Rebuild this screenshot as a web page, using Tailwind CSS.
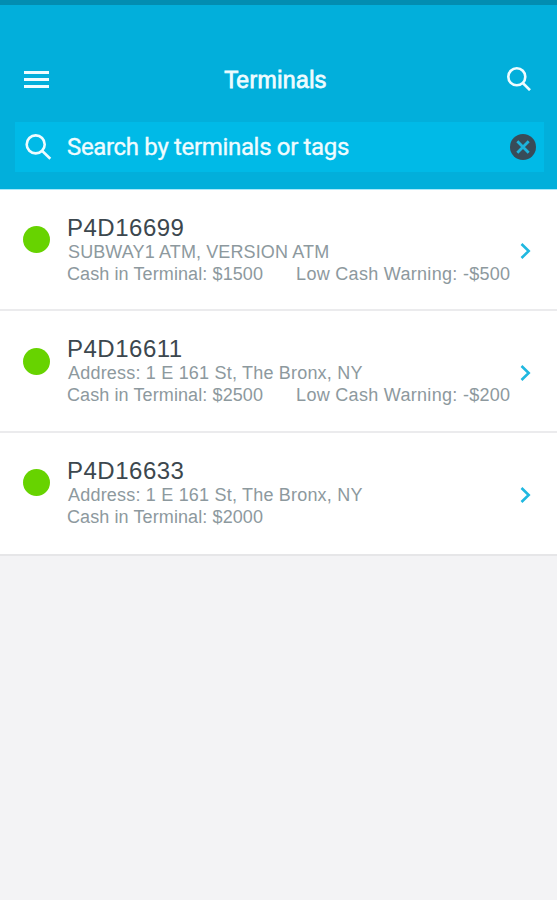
<!DOCTYPE html>
<html lang="en">
<head>
    <meta charset="UTF-8">
    <meta name="viewport" content="width=device-width, initial-scale=1.0">
    <title>Terminals</title>
    <script src="https://cdn.jsdelivr.net/npm/@tailwindcss/browser@4"></script>
</head>
<body class="bg-[#f3f3f5] min-h-screen font-['Liberation_Sans',sans-serif]">
    <!-- Header -->
    <header class="h-[190px] bg-[#02afdb] border-t-5 border-t-[#028db1] border-b border-b-[#a9e9fa] text-[#effcff]">
        <div class="flex items-center justify-between h-[116px] pt-[34px] pl-6 pr-[26px]">
            <button class="flex flex-col gap-1 w-[25px] mb-0.5">
                <span class="h-[3px] w-full bg-current"></span>
                <span class="h-[3px] w-full bg-current"></span>
                <span class="h-[3px] w-full bg-current"></span>
            </button>
            <h1 class="mr-[5px] text-[23px] leading-7 font-normal tracking-[0.45px] [-webkit-text-stroke:0.8px_currentColor]">Terminals</h1>
            <button class="mb-0.5">
                <svg class="w-6 h-6" viewBox="0 0 24 24" fill="none" stroke="currentColor" stroke-width="2.6">
                    <circle cx="9.8" cy="9.8" r="8.5"/>
                    <path d="M15.8 16L23 23.2"/>
                </svg>
            </button>
        </div>
        <!-- Search bar -->
        <div class="flex items-center h-[50px] mt-px ml-[15px] mr-[13px] pl-[10px] pr-2 bg-[#00bae7]">
            <svg class="w-[27px] h-[26px]" viewBox="0 0 27 26" fill="none" stroke="currentColor" stroke-width="2.6">
                <circle cx="10.7" cy="10.4" r="9"/>
                <path d="M17.3 17L25.3 24.8"/>
            </svg>
            <span class="flex-1 pl-[15px] font-['Roboto',sans-serif] text-2xl tracking-[-0.33px] [-webkit-text-stroke:0.35px_currentColor]">Search by terminals or tags</span>
            <svg class="w-[26px] h-[26px]" viewBox="0 0 26 26">
                <circle cx="13" cy="13" r="13" fill="#384b58"/>
                <path d="M7.3 7.3L18.7 18.7M18.7 7.3L7.3 18.7" stroke="#1cb3dc" stroke-width="2.8"/>
            </svg>
        </div>
    </header>

    <!-- Terminal list -->
    <ul class="bg-white text-[#8d999e]">
        <li class="flex h-[121px] pt-[25px] pl-[23px] pr-[26px] border-b-2 border-[#ebebed]">
            <span class="w-[27px] h-[27px] mt-[11px] rounded-full bg-[#67d300]"></span>
            <div class="flex-1 pl-[17px] text-lg leading-[22px] whitespace-nowrap">
                <h2 class="text-2xl leading-[26px] tracking-[0.5px] text-[#3c474e]">P4D16699</h2>
                <p class="pl-px tracking-[0.12px]">SUBWAY1 ATM, VERSION ATM</p>
                <p class="flex gap-[33px]"><span class="tracking-[0.1px]">Cash in Terminal: $1500</span><span class="tracking-[0.3px]">Low Cash Warning: -$500</span></p>
            </div>
            <svg class="w-[11px] h-4 mt-[28px]" viewBox="0 0 11 16" fill="none" stroke="#20b8e0" stroke-width="2.6">
                <path d="M1.5 1L8.7 8L1.5 15"/>
            </svg>
        </li>
        <li class="flex h-[122px] pt-[25px] pl-[23px] pr-[26px] border-b-2 border-[#ebebed]">
            <span class="w-[27px] h-[27px] mt-[12px] rounded-full bg-[#67d300]"></span>
            <div class="flex-1 pl-[17px] text-lg leading-[22px] whitespace-nowrap">
                <h2 class="text-2xl leading-[26px] tracking-[0.5px] text-[#3c474e]">P4D16611</h2>
                <p class="pl-px tracking-[0.2px]">Address: 1 E 161 St, The Bronx, NY</p>
                <p class="flex gap-[33px]"><span class="tracking-[0.1px]">Cash in Terminal: $2500</span><span class="tracking-[0.3px]">Low Cash Warning: -$200</span></p>
            </div>
            <svg class="w-[11px] h-4 mt-[29px]" viewBox="0 0 11 16" fill="none" stroke="#20b8e0" stroke-width="2.6">
                <path d="M1.5 1L8.7 8L1.5 15"/>
            </svg>
        </li>
        <li class="flex h-[123px] pt-[25px] pl-[23px] pr-[26px] border-b-2 border-[#e6e6e8]">
            <span class="w-[27px] h-[27px] mt-[11px] rounded-full bg-[#67d300]"></span>
            <div class="flex-1 pl-[17px] text-lg leading-[22px] whitespace-nowrap">
                <h2 class="text-2xl leading-[26px] tracking-[0.5px] text-[#3c474e]">P4D16633</h2>
                <p class="pl-px tracking-[0.2px]">Address: 1 E 161 St, The Bronx, NY</p>
                <p class="tracking-[0.1px]">Cash in Terminal: $2000</p>
            </div>
            <svg class="w-[11px] h-4 mt-[29px]" viewBox="0 0 11 16" fill="none" stroke="#20b8e0" stroke-width="2.6">
                <path d="M1.5 1L8.7 8L1.5 15"/>
            </svg>
        </li>
    </ul>
</body>
</html>
